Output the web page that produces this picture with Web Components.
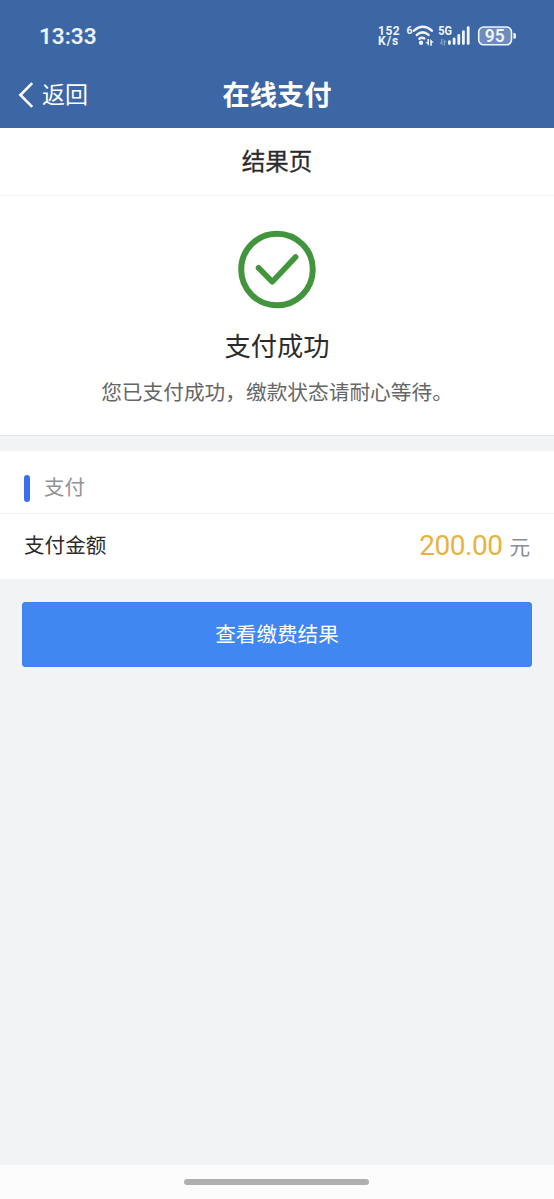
<!DOCTYPE html>
<html lang="zh-CN">
<head>
<meta charset="utf-8">
<meta name="viewport" content="width=device-width, initial-scale=1">
<title>在线支付</title>
<style>
  html, body {
    margin: 0;
    height: 100%;
  }
  body {
    font-family: "Noto Sans CJK SC", sans-serif;
    color: #2b2b2b;
    background-color: #f2f3f5;
    overflow: hidden;
  }
</style>
</head>
<body>
<pay-screen>
  <status-bar slot="header" time="13:33"></status-bar>
  <nav-bar slot="header" back="返回">在线支付</nav-bar>
  <page-title>结果页</page-title>
  <pay-result>
    支付成功
    <span slot="message">您已支付成功，缴款状态请耐心等待。</span>
  </pay-result>
  <info-section heading="支付">
    <amount-row label="支付金额" unit="元">200.00</amount-row>
  </info-section>
  <action-button>查看缴费结果</action-button>
  <home-indicator slot="footer"></home-indicator>
</pay-screen>

<script>
class BaseElement extends HTMLElement {
  constructor() {
    super();
    this.attachShadow({ mode: "open" });
  }

  connectedCallback() {
    const template = document.createElement("template");
    template.innerHTML = this.render();
    this.shadowRoot.replaceChildren(template.content.cloneNode(true));
  }
}

class PayScreen extends BaseElement {
  render() {
    return `
      <style>
        :host {
          display: flex;
          flex-direction: column;
          height: 100vh;
        }
        header {
          background-color: #3c66a4;
        }
        main {
          flex: 1;
        }
      </style>
      <header><slot name="header"></slot></header>
      <main><slot></slot></main>
      <slot name="footer"></slot>
    `;
  }
}

class StatusBar extends BaseElement {
  render() {
    return `
      <style>
        :host {
          display: flex;
          justify-content: space-between;
          align-items: center;
          box-sizing: border-box;
          height: 72px;
          padding: 0 36px 1px 39px;
          color: #eef5ff;
          font-family: Roboto, sans-serif;
        }
        .time {
          font-size: 22.5px;
          font-weight: 600;
        }
        .status {
          display: flex;
          align-items: center;
        }
        .speed {
          display: grid;
          grid-template-rows: 10px 10px;
          width: 28px;
          font-size: 12px;
          font-weight: 700;
          line-height: 10px;
        }
        .speed span:first-child {
          letter-spacing: 0.5px;
        }
        .speed span:last-child {
          letter-spacing: 1px;
        }
        svg {
          display: block;
          fill: currentColor;
        }
        .line {
          fill: none;
          stroke: currentColor;
          stroke-linecap: round;
        }
      </style>
      <span class="time">${this.getAttribute("time")}</span>
      <div class="status">
        <div class="speed"><span>152</span><span>K/s</span></div>
        <svg width="112" height="28" viewBox="406 22 112 28" font-family="Roboto" font-weight="700">
          <!-- wifi -->
          <text x="406.6" y="33.6" font-size="10.5">6</text>
          <g class="line" stroke-width="2.5">
            <path d="M414 30.6Q422.8 23 431.8 30.6"/>
            <path d="M416.8 34.9Q422.6 29.8 428.6 34.9"/>
            <path d="M419.4 38.8Q421.6 37 424.2 38.4"/>
          </g>
          <circle cx="421" cy="42.8" r="2.2"/>
          <path d="M429 39v6.8l-3.6-3.6h2v-3.2zM430.2 45.8v-6.8l3.6 3.6h-2v3.2z"/>
          <!-- cellular -->
          <text x="438.3" y="34.7" font-size="12.5" textLength="13.8" lengthAdjust="spacingAndGlyphs">5G</text>
          <path opacity=".4" d="M442.4 39v6.4l-3.2-3.2h1.8v-3.2zM443.6 45.4v-6.4l3.2 3.2h-1.8v3.2z"/>
          <g class="line" stroke-width="2.8">
            <path d="M449.4 41.6v2M454.1 38.8v4.8M458.8 35.4v8.2M463.4 31.6v12M468.2 27.6v16"/>
          </g>
          <!-- battery -->
          <rect x="478.7" y="27" width="32.8" height="17.8" rx="5" fill="#fff" fill-opacity=".25" stroke="currentColor" stroke-width="1.6"/>
          <path d="M513.4 32.8q2.6 0 2.6 1.6v2.8q0 1.6-2.6 1.6z"/>
          <text x="484.8" y="42.3" font-size="17.5" font-weight="600">95</text>
        </svg>
      </div>
    `;
  }
}

class NavBar extends BaseElement {
  render() {
    return `
      <style>
        :host {
          display: grid;
          grid-template-columns: 1fr auto 1fr;
          align-items: center;
          box-sizing: border-box;
          height: 56px;
          padding: 0 18px 12px;
          color: #fff;
        }
        .back {
          display: flex;
          align-items: center;
          gap: 8px;
          font-size: 23px;
          line-height: 1;
        }
        svg {
          margin-top: 1px;
          fill: none;
          stroke: currentColor;
          stroke-width: 2.6;
        }
        .back span {
          margin-top: -1px;
        }
        h1 {
          margin: -1px 0 0;
          font-size: 27.3px;
          font-weight: 700;
          line-height: 1;
        }
      </style>
      <div class="back">
        <svg width="16" height="28" viewBox="0 0 16 28"><path d="M14.2 2.2 2.4 14l11.8 11.8"/></svg>
        <span>${this.getAttribute("back")}</span>
      </div>
      <h1><slot></slot></h1>
    `;
  }
}

class PageTitle extends BaseElement {
  render() {
    return `
      <style>
        :host {
          display: block;
          height: 67px;
          border-bottom: 1px solid #f3f3f3;
          background-color: #fff;
          font-size: 23.5px;
          line-height: 64px;
          text-align: center;
          -webkit-text-stroke: 0.3px currentColor;
        }
      </style>
      <slot></slot>
    `;
  }
}

class PayResult extends BaseElement {
  render() {
    return `
      <style>
        :host {
          display: flex;
          flex-direction: column;
          align-items: center;
          box-sizing: border-box;
          height: 240px;
          padding-top: 34px;
          border-bottom: 1px solid #e4e5e7;
          background-color: #fff;
        }
        svg {
          fill: none;
          stroke: #43953d;
          stroke-width: 6;
        }
        h2 {
          margin: 15px 0 0;
          font-size: 26.3px;
          font-weight: 400;
          line-height: 40px;
        }
        p {
          margin: 11px 0 0;
          color: #666;
          font-size: 20.7px;
          line-height: 30px;
        }
      </style>
      <svg width="80" height="80" viewBox="0 0 80 80">
        <circle cx="40" cy="39.5" r="35.8"/>
        <path d="M21.5 37.8 35.2 51.8 58.6 27" stroke-width="5.6" stroke-linecap="round" stroke-linejoin="round"/>
      </svg>
      <h2><slot></slot></h2>
      <p><slot name="message"></slot></p>
    `;
  }
}

class InfoSection extends BaseElement {
  render() {
    return `
      <style>
        :host {
          display: block;
          margin-top: 15px;
          background-color: #fff;
        }
        h3 {
          display: flex;
          align-items: center;
          gap: 14px;
          box-sizing: border-box;
          height: 63px;
          margin: 0;
          padding: 9px 24px 0;
          border-bottom: 1px solid #f0f1f2;
          color: #919294;
          font-size: 20.5px;
          font-weight: 400;
          line-height: 1;
        }
        h3::before {
          content: "";
          width: 6px;
          height: 27px;
          margin-top: 3px;
          border-radius: 3px;
          background-color: #3a6ff0;
        }
      </style>
      <h3>${this.getAttribute("heading")}</h3>
      <slot></slot>
    `;
  }
}

class AmountRow extends BaseElement {
  render() {
    return `
      <style>
        :host {
          display: flex;
          align-items: center;
          justify-content: space-between;
          box-sizing: border-box;
          height: 65px;
          padding: 0 24px 2px;
          font-size: 20.6px;
        }
        .label {
          margin-top: -3px;
        }
        .value {
          display: flex;
          align-items: baseline;
          gap: 7px;
          color: #8a8d91;
          line-height: 1;
        }
        .amount {
          color: #e9b23f;
          font-family: Roboto, sans-serif;
          font-size: 28px;
          letter-spacing: -0.5px;
        }
      </style>
      <span class="label">${this.getAttribute("label")}</span>
      <div class="value">
        <span class="amount"><slot></slot></span>
        <span>${this.getAttribute("unit")}</span>
      </div>
    `;
  }
}

class ActionButton extends BaseElement {
  render() {
    return `
      <style>
        :host {
          display: block;
          padding: 23px 22px;
        }
        button {
          display: block;
          box-sizing: border-box;
          width: 100%;
          height: 65px;
          padding: 0 0 4px;
          border: 1px solid #3d82ea;
          border-radius: 3px;
          background-color: #4087f1;
          color: #fff;
          font: inherit;
          font-size: 20.6px;
        }
      </style>
      <button type="button"><slot></slot></button>
    `;
  }
}

class HomeIndicator extends BaseElement {
  render() {
    return `
      <style>
        :host {
          display: flex;
          align-items: center;
          justify-content: center;
          height: 34px;
          padding-right: 1px;
          background-color: #fcfcfc;
        }
        span {
          width: 185px;
          height: 6px;
          border-radius: 3px;
          background-color: #afafaf;
        }
      </style>
      <span></span>
    `;
  }
}

customElements.define("pay-screen", PayScreen);
customElements.define("status-bar", StatusBar);
customElements.define("nav-bar", NavBar);
customElements.define("page-title", PageTitle);
customElements.define("pay-result", PayResult);
customElements.define("info-section", InfoSection);
customElements.define("amount-row", AmountRow);
customElements.define("action-button", ActionButton);
customElements.define("home-indicator", HomeIndicator);
</script>
</body>
</html>
